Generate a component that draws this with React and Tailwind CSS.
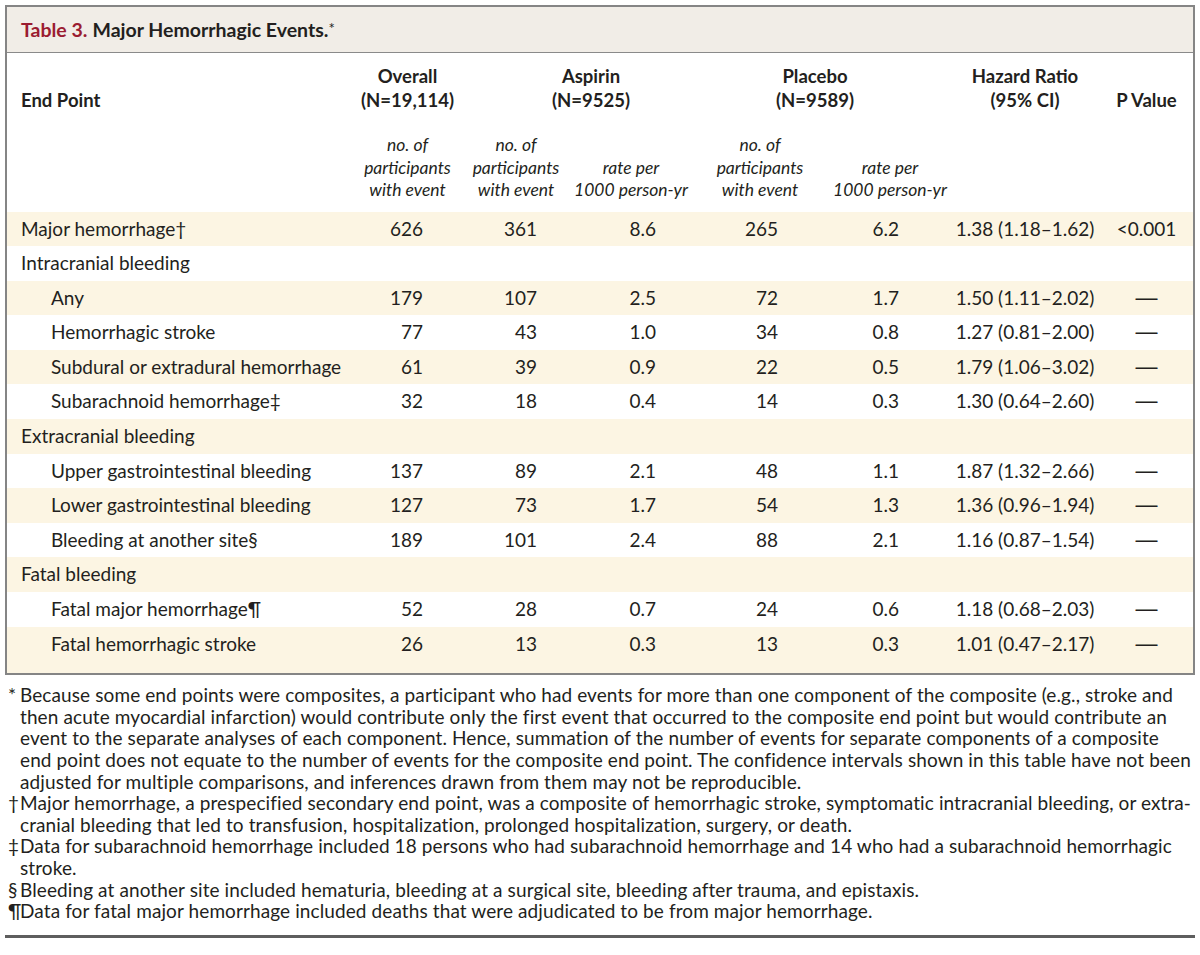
import React from 'react';

const font = { fontFamily: 'Lato, "Open Sans", "Liberation Sans", sans-serif' };

const rows = [
    { label: 'Major hemorrhage†', v: ['626', '361', '8.6', '265', '6.2', '1.38 (1.18–1.62)', '<0.001'] },
    { label: 'Intracranial bleeding' },
    { label: 'Any', sub: true, v: ['179', '107', '2.5', '72', '1.7', '1.50 (1.11–2.02)', '—'] },
    { label: 'Hemorrhagic stroke', sub: true, v: ['77', '43', '1.0', '34', '0.8', '1.27 (0.81–2.00)', '—'] },
    { label: 'Subdural or extradural hemorrhage', sub: true, v: ['61', '39', '0.9', '22', '0.5', '1.79 (1.06–3.02)', '—'] },
    { label: 'Subarachnoid hemorrhage‡', sub: true, v: ['32', '18', '0.4', '14', '0.3', '1.30 (0.64–2.60)', '—'] },
    { label: 'Extracranial bleeding' },
    { label: 'Upper gastrointestinal bleeding', sub: true, v: ['137', '89', '2.1', '48', '1.1', '1.87 (1.32–2.66)', '—'] },
    { label: 'Lower gastrointestinal bleeding', sub: true, v: ['127', '73', '1.7', '54', '1.3', '1.36 (0.96–1.94)', '—'] },
    { label: 'Bleeding at another site§', sub: true, v: ['189', '101', '2.4', '88', '2.1', '1.16 (0.87–1.54)', '—'] },
    { label: 'Fatal bleeding' },
    { label: 'Fatal major hemorrhage¶', sub: true, v: ['52', '28', '0.7', '24', '0.6', '1.18 (0.68–2.03)', '—'] },
    { label: 'Fatal hemorrhagic stroke', sub: true, v: ['26', '13', '0.3', '13', '0.3', '1.01 (0.47–2.17)', '—'] },
];

const notes = [
    {
        mark: '*',
        lines: [
            'Because some end points were composites, a participant who had events for more than one component of the composite (e.g., stroke and',
            'then acute myocardial infarction) would contribute only the first event that occurred to the composite end point but would contribute an',
            'event to the separate analyses of each component. Hence, summation of the number of events for separate components of a composite',
            'end point does not equate to the number of events for the composite end point. The confidence intervals shown in this table have not been',
            'adjusted for multiple comparisons, and inferences drawn from them may not be reproducible.',
        ],
    },
    {
        mark: '†',
        lines: [
            'Major hemorrhage, a prespecified secondary end point, was a composite of hemorrhagic stroke, symptomatic intracranial bleeding, or extra-',
            'cranial bleeding that led to transfusion, hospitalization, prolonged hospitalization, surgery, or death.',
        ],
    },
    {
        mark: '‡',
        lines: [
            'Data for subarachnoid hemorrhage included 18 persons who had subarachnoid hemorrhage and 14 who had a subarachnoid hemorrhagic',
            'stroke.',
        ],
    },
    { mark: '§', lines: ['Bleeding at another site included hematuria, bleeding at a surgical site, bleeding after trauma, and epistaxis.'] },
    { mark: '¶', lines: ['Data for fatal major hemorrhage included deaths that were adjudicated to be from major hemorrhage.'] },
];

// right padding for the numeric columns, so digits line up like the print table
const numPad = ['pr-[37px]', 'pr-[35px]', 'pr-[34px]', 'pr-[52px]', 'pr-[51px]'];

const SubHead = ({ children }) => (
    <th className="pt-[22px] pb-[10px] text-center align-bottom italic font-normal text-[17.5px] leading-[22.5px]">{children}</th>
);

const App = () => {
    return (
        <div className="w-[1200px] h-[955px] bg-white px-[5px] pt-[5px] text-[19px] text-[#231f20]" style={font}>
            <div className="border-2 border-[#858585]">
                {/* Title */}
                <div className="h-[46px] bg-[#f1ede7] border-b border-[#8a8a8a] flex items-center pl-[14px] text-[19.5px] font-bold">
                    <span className="text-[#9b1c31]">Table 3.</span>
                    <span className="ml-[5px]">Major Hemorrhagic Events.</span>
                    <span className="text-[15px] font-normal self-start mt-[10px]">*</span>
                </div>

                <table className="w-full table-fixed border-collapse">
                    <colgroup>
                        <col className="w-[348px]" />
                        <col className="w-[105px]" />
                        <col className="w-[112px]" />
                        <col className="w-[118px]" />
                        <col className="w-[140px]" />
                        <col className="w-[120px]" />
                        <col className="w-[150px]" />
                        <col className="w-[93px]" />
                    </colgroup>
                    <thead>
                        <tr className="leading-[24px] text-[18.5px]">
                            <th className="pt-[11px] pl-[14px] text-left align-bottom font-bold">End Point</th>
                            <th className="pt-[11px] text-center align-bottom font-bold">Overall<br />(N=19,114)</th>
                            <th colSpan={2} className="pt-[11px] text-center align-bottom font-bold pl-[32px]">Aspirin<br />(N=9525)</th>
                            <th colSpan={2} className="pt-[11px] text-center align-bottom font-bold pr-[10px]">Placebo<br />(N=9589)</th>
                            <th className="pt-[11px] text-center align-bottom font-bold">Hazard Ratio<br />(95% CI)</th>
                            <th className="pt-[11px] text-center align-bottom font-bold whitespace-nowrap">P Value</th>
                        </tr>
                        <tr>
                            <th />
                            <SubHead>no. of<br />participants<br />with event</SubHead>
                            <SubHead>no. of<br />participants<br />with event</SubHead>
                            <SubHead>rate per<br />1000 person-yr</SubHead>
                            <SubHead>no. of<br />participants<br />with event</SubHead>
                            <SubHead>rate per<br />1000 person-yr</SubHead>
                            <th />
                            <th />
                        </tr>
                    </thead>
                    <tbody>
                        {rows.map((r, i) => {
                            const last = i === rows.length - 1;
                            const cell = last ? 'pt-[5px] pb-[17px] leading-[24.6px]' : 'py-[5px] leading-[24.6px]';
                            return (
                                <tr key={r.label} className={i % 2 === 0 ? 'bg-[#fcf5e3]' : 'bg-white'}>
                                    <td className={`${cell} ${r.sub ? 'pl-[44px]' : 'pl-[14px]'} whitespace-nowrap`}>{r.label}</td>
                                    {r.v
                                        ? r.v.map((val, j) => (
                                              <td key={j} className={`${cell} ${j < 5 ? `text-right ${numPad[j]}` : 'text-center'} whitespace-nowrap`}>
                                                  {val === '—' ? (
                                                      <span className="font-['Liberation_Sans'] text-[22px]">—</span>
                                                  ) : (
                                                      val
                                                  )}
                                              </td>
                                          ))
                                        : [0, 1, 2, 3, 4, 5, 6].map((j) => <td key={j} className={cell} />)}
                                </tr>
                            );
                        })}
                    </tbody>
                </table>
            </div>

            {/* Footnotes */}
            <div className="mt-[9px] leading-[21.6px] tracking-[0.1px]">
                {notes.map((n) => (
                    <div key={n.mark} className="flex">
                        <span className="w-[15px] shrink-0 pl-[3px]">{n.mark}</span>
                        <div>
                            {n.lines.map((l) => (
                                <div key={l} className="whitespace-nowrap">{l}</div>
                            ))}
                        </div>
                    </div>
                ))}
            </div>
            <div className="mt-[13px] h-[3px] bg-[#5e5e5e]" />
        </div>
    );
};

export default App;
